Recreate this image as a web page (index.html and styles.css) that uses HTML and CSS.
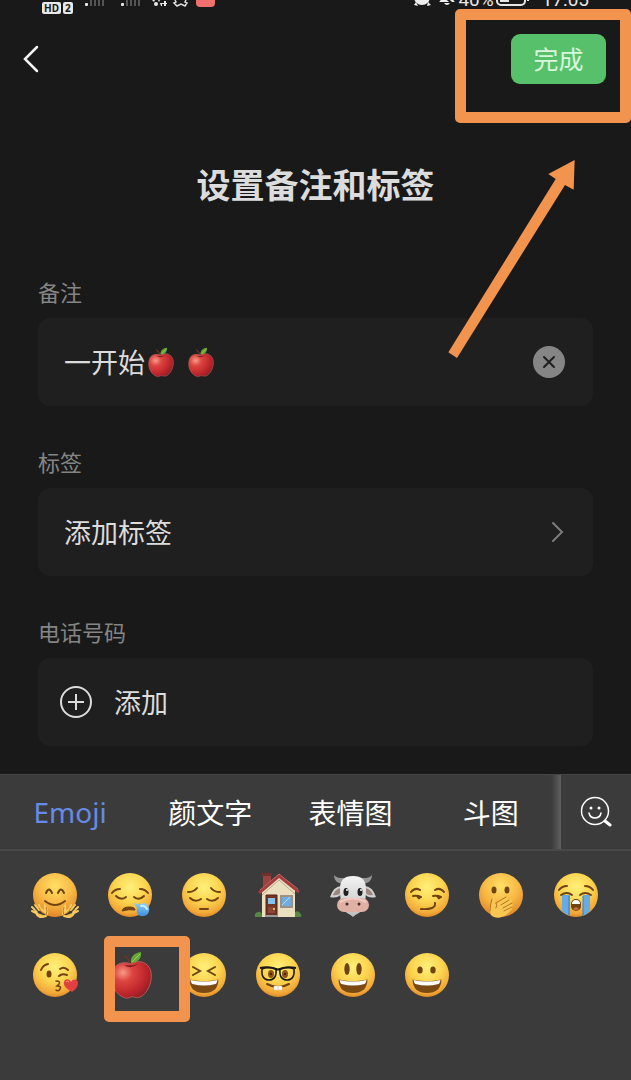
FILE: index.html
```html
<!DOCTYPE html>
<html lang="zh-CN">
  <head>
    <meta charset="UTF-8" />
    <meta name="viewport" content="width=device-width, initial-scale=1.0" />
    <title>设置备注和标签</title>
    <link rel="stylesheet" href="styles.css">
  </head>
  <body>
    <!-- shared emoji parts -->
    <svg class="defs" width="0" height="0" aria-hidden="true">
      <defs>
        <radialGradient id="skin" cx="50%" cy="32%" r="70%">
          <stop offset="0" stop-color="#fff07a" />
          <stop offset="0.5" stop-color="#fbd44f" />
          <stop offset="0.85" stop-color="#f2a838" />
          <stop offset="1" stop-color="#d98424" />
        </radialGradient>
        <radialGradient id="warm" cx="50%" cy="30%" r="72%">
          <stop offset="0" stop-color="#ffe067" />
          <stop offset="0.55" stop-color="#f8b843" />
          <stop offset="1" stop-color="#e08328" />
        </radialGradient>
        <radialGradient id="red" cx="28%" cy="30%" r="80%">
          <stop offset="0" stop-color="#f79a88" />
          <stop offset="0.3" stop-color="#dd4541" />
          <stop offset="0.75" stop-color="#bd242a" />
          <stop offset="1" stop-color="#8b1f24" />
        </radialGradient>
        <linearGradient id="water" x1="0" y1="0" x2="0" y2="1">
          <stop offset="0" stop-color="#8ecdf6" />
          <stop offset="1" stop-color="#3c8fdc" />
        </linearGradient>
        <linearGradient id="cowhide" x1="0" y1="0" x2="0" y2="1">
          <stop offset="0" stop-color="#f4f4f4" />
          <stop offset="1" stop-color="#bdbdbd" />
        </linearGradient>
      </defs>
      <symbol id="face" viewBox="0 0 48 48">
        <circle cx="24" cy="24" r="22" fill="url(#skin)" />
      </symbol>
      <symbol id="grin" viewBox="0 0 48 48">
        <path d="M9.500 28.500Q24 32 38.500 28.500Q38 42 24 42T9.500 28.500Z" fill="#7a4a12" />
        <path d="M10.500 29Q24 32 37.500 29Q37 32 35.500 33Q24 36 12.500 33Q11 32 10.500 29Z" fill="#fff" />
      </symbol>
      <symbol id="apple" viewBox="0 0 48 48">
        <path d="M25 14Q23 8 19 5" fill="none" stroke="#6b3424" stroke-width="2" stroke-linecap="round" />
        <path d="M25 13C32 8 43 11 45 21C47 32 40 44 34 46C30 48 28 45 25 46C21 48 18 47 15 45C8 41 4 30 7 20C9 12 18 10 25 13Z" fill="url(#red)" stroke="#b9595c" />
        <path d="M18 14Q25 19 32 13Q26 15 18 14Z" fill="#85201f" />
        <path d="M25 12C24 6 28 2 35 1C36 7 32 12 25 12Z" fill="#66a637" />
        <path d="M26 11L34 3" stroke="#a2cf5c" />
      </symbol>
    </svg>

    <div class="page">
      <div class="status-bar">
        <div class="status-left">
          <span class="badge">HD</span>
          <span class="badge">2</span>
          <svg class="signals" width="134" height="14" viewBox="0 0 134 14" aria-hidden="true">
            <g fill="#e8e8e8">
              <rect x="0" y="3" width="3" height="3" rx="1" />
              <rect x="36" y="3" width="3" height="3" rx="1" />
              <circle cx="71" cy="4" r="2" />
              <path d="M67 0h3l-1 2zM73 0h2l-1 2zM75 3h2v3h-1zM79 1h2v5h-2zM77 3h5v1h-5z" />
            </g>
            <path d="M4 0v6M8 0v6M12 0v6M16 0v6M40 0v6M44 0v6M48 0v6M52 0v6" transform="translate(2)" stroke="#555" stroke-width="2" />
            <path d="M90 0l1 2-2 1 3 3 4-2 4 2 2-3-2-1 1-2" fill="none" stroke="#ddd" stroke-width="1.500" />
            <rect x="111" y="-8" width="19" height="15" rx="4" fill="#ef706d" />
          </svg>
        </div>
        <div class="status-right">
          <svg width="44" height="20" viewBox="0 0 44 20" aria-hidden="true">
            <g fill="#eee">
              <circle cx="10" cy="7" r="8" />
              <path d="M4 12L2 15l4 1zM16 12l3 3-4 1z" />
              <path d="M27 12c3-2 3-10 8-11 5 1 5 9 8 11zM32 13h6q-3 4-6 0z" />
            </g>
            <path d="M26 1L42 15" stroke="#191919" stroke-width="2" />
          </svg>
          <span>40%</span>
          <svg class="battery" width="36" height="20" viewBox="0 0 36 20" aria-hidden="true">
            <rect x="1" y="1" width="28" height="14" rx="4" fill="none" stroke="#e6e6e6" stroke-width="2" />
            <path d="M4 4h9v8H4z" fill="#e6e6e6" />
            <path d="M32 6v5" stroke="#e6e6e6" stroke-width="2" />
          </svg>
          <span>17:05</span>
        </div>
      </div>

      <header class="top-bar">
        <button class="back" type="button" aria-label="返回">
          <svg width="18" height="30" viewBox="0 0 18 30"><path d="M15 3L3 15L15 27" fill="none" stroke="#f2f2f2" stroke-width="2.500" stroke-linecap="round" /></svg>
        </button>
        <div class="done-wrap">
          <button class="done" type="button">完成</button>
          <span class="frame frame-done"></span>
        </div>
      </header>

      <main>
        <h1>设置备注和标签</h1>

        <section class="field">
          <label for="remark">备注</label>
          <div class="card">
            <input type="text" id="remark" value="一开始" />
            <svg class="apple" viewBox="0 0 48 48"><use href="#apple" /></svg>
            <svg class="apple" viewBox="0 0 48 48"><use href="#apple" /></svg>
            <button class="clear" type="button" aria-label="清除">
              <svg width="32" height="32" viewBox="0 0 32 32"><circle cx="16" cy="16" r="16" fill="#858585" /><path d="M11 11L21 21M21 11L11 21" stroke="#1e1e1e" stroke-width="2" stroke-linecap="round" /></svg>
            </button>
          </div>
        </section>

        <section class="field">
          <h2>标签</h2>
          <button class="card" type="button">
            <span>添加标签</span>
            <svg class="chevron" width="14" height="22" viewBox="0 0 14 22"><path d="M2 2L11 11L2 20" fill="none" stroke="#7c7c7c" stroke-width="2" stroke-linecap="round" /></svg>
          </button>
        </section>

        <section class="field">
          <h2>电话号码</h2>
          <button class="card add" type="button">
            <svg width="32" height="32" viewBox="0 0 32 32"><circle cx="16" cy="16" r="15" fill="none" stroke="#dcdcdc" stroke-width="2" /><path d="M8 16h16M16 8v16" stroke="#dcdcdc" stroke-width="2" /></svg>
            <span>添加</span>
          </button>
        </section>
      </main>

      <div class="keyboard">
        <div class="tabs">
          <nav>
            <button class="active" type="button">Emoji</button>
            <button type="button">颜文字</button>
            <button type="button">表情图</button>
            <button type="button">斗图</button>
          </nav>
          <button class="search" type="button" aria-label="搜索表情">
            <svg width="32" height="32" viewBox="0 0 32 32" fill="none" stroke="#fff" stroke-linecap="round">
              <circle cx="15" cy="15" r="13.500" stroke-width="1.500" />
              <path d="M9 17Q10 22 15 22T21 17" stroke-width="1.500" />
              <path d="M25 25L30 29" stroke-width="3" />
              <path d="M11 12h0M19 12h0" stroke-width="3" />
            </svg>
          </button>
        </div>

        <div class="emoji-grid">
          <button type="button" aria-label="拥抱">
            <svg viewBox="0 0 48 48">
              <circle cx="24" cy="24" r="22" fill="url(#warm)" />
              <g fill="none" stroke="#714313" stroke-width="2" stroke-linecap="round">
                <path d="M15 22Q18 15 21 22M27 22Q30 15 33 22" />
                <path d="M14 30Q24 38 34 30" />
              </g>
              <g fill="#f6bd48" stroke="#f9cb60" stroke-width="2" stroke-linecap="round">
                <path d="M15 45Q7 48 5 42L1 40M6 41L1 36M8 39L4 34M10 39L8 34M10 38L14 41L14 35Q17 38 16 43Z" />
                <path d="M33 45Q41 48 43 42L47 40M42 41L47 36M40 39L44 34M38 39L40 34M38 38L34 41L34 35Q31 38 32 43Z" />
              </g>
              <path d="M7 41L4 38M10 40L8 37M41 41L44 38M38 40L40 37M15 36Q17 40 15 44M33 36Q31 40 33 44" stroke="#c27a22" fill="none" />
            </svg>
          </button>
          <button type="button" aria-label="困">
            <svg viewBox="0 0 48 48">
              <use href="#face" />
              <g fill="none" stroke="#714313" stroke-width="2" stroke-linecap="round">
                <path d="M6 22Q9 18 14 18M34 18Q39 18 42 22" />
                <path d="M10 25Q15 30 20 26M28 26Q33 30 38 25" />
              </g>
              <path d="M16 40Q17 36 23 36T29 39Q23 38 16 40Z" fill="#714313" stroke="#714313" />
              <path d="M27 32Q34 34 38 32C45 33 45 44 38 45C32 46 30 42 31 38Q31 35 27 32Z" fill="url(#water)" />
              <path d="M35 35Q39 34 41 38" stroke="#c9ecff" stroke-width="2" fill="none" stroke-linecap="round" />
            </svg>
          </button>
          <button type="button" aria-label="沉思">
            <svg viewBox="0 0 48 48">
              <use href="#face" />
              <g fill="none" stroke="#714313" stroke-width="2" stroke-linecap="round">
                <path d="M8 21Q14 21 17 17M31 17Q34 21 40 21" />
                <path d="M10 27Q15 32 21 28M27 28Q33 32 38 27" />
                <path d="M20 38H28" />
              </g>
            </svg>
          </button>
          <button type="button" aria-label="房子">
            <svg viewBox="0 0 48 48">
              <path d="M9 3h8v14H9z" fill="#984340" />
              <path d="M8 2h10v3H8z" fill="#6f302e" />
              <path d="M8 20L25 5L41 19V46H8Z" fill="#eadfbf" />
              <path d="M8 24L25 9L41 23" fill="none" stroke="#b9a98a" />
              <path d="M5 22L25 5L45 21" fill="none" stroke="#a53d40" stroke-width="3" />
              <path d="M6 19L25 3L44 18" fill="none" stroke="#c2625e" />
              <path d="M12 24h11v21H12z" fill="#713324" stroke="#532519" />
              <path d="M14 27h7v6h-7z" fill="#86bfe8" />
              <path d="M14 36h7v6h-7z" fill="#8a4632" />
              <circle cx="20" cy="38" r="1" fill="#e8d18a" />
              <path d="M27 25h11v11H27z" fill="#70ace0" stroke="#9b9285" stroke-width="2" />
              <path d="M28 34L36 26" stroke="#b8daf3" />
              <path d="M11 44h13v2H11z" fill="#9a9a9a" />
              <path d="M1 46Q0 42 4 41Q8 40 8 46ZM41 46V41Q44 39 46 42Q49 45 46 46Z" fill="#568842" />
            </svg>
          </button>
          <button type="button" aria-label="牛">
            <svg viewBox="0 0 48 48">
              <path d="M16 13C8 13 5 9 5 4C8 8 13 7 19 7ZM32 13C40 13 43 9 43 4C40 8 35 7 29 7Z" fill="#959595" />
              <path d="M14 15Q5 14 1 26Q9 28 13 22ZM34 15Q43 14 47 26Q39 28 35 22Z" fill="#cfcfcf" />
              <path d="M12 17Q6 18 4 24Q9 25 12 21ZM36 17Q42 18 44 24Q39 25 36 21Z" fill="#9c8680" />
              <path d="M24 5C33 5 37 9 37 18C37 26 36 32 35 38C31 42 27 43 24 46C21 43 17 42 13 38C12 32 11 26 11 18C11 9 15 5 24 5Z" fill="url(#cowhide)" />
              <rect x="8" y="27" width="32" height="14" rx="7" fill="#dfb1a5" />
              <path d="M11 31Q24 24 37 31" fill="none" stroke="#efcdc3" stroke-width="2" />
              <ellipse cx="17" cy="21" rx="2.500" ry="4" fill="#202020" />
              <ellipse cx="31" cy="21" rx="2.500" ry="4" fill="#202020" />
              <circle cx="18" cy="19" r="1" fill="#fff" />
              <circle cx="32" cy="19" r="1" fill="#fff" />
              <circle cx="18" cy="33" r="1.500" fill="#4b2826" />
              <circle cx="30" cy="33" r="1.500" fill="#4b2826" />
            </svg>
          </button>
          <button type="button" aria-label="得意">
            <svg viewBox="0 0 48 48">
              <use href="#face" />
              <g fill="none" stroke="#714313" stroke-width="2" stroke-linecap="round">
                <path d="M8 21Q12 16 17 19M32 19Q37 16 41 21" />
                <path d="M10 25Q14 24 18 26M30 25Q34 24 38 26" />
                <path d="M18 38Q33 39 32 32" />
              </g>
              <path d="M13 25h5q0 4-3 3zM33 25h5q0 4-3 3z" fill="#714313" />
            </svg>
          </button>
          <button type="button" aria-label="捂嘴">
            <svg viewBox="0 0 48 48">
              <circle cx="24" cy="24" r="22" fill="url(#warm)" />
              <ellipse cx="17" cy="19" rx="2.500" ry="3.500" fill="#714313" />
              <ellipse cx="30" cy="19" rx="2.500" ry="3.500" fill="#714313" />
              <path d="M14 44C11 38 14 32 15 27Q18 24 19 32L29 26Q32 26 31 29L34 28Q37 30 34 33Q37 33 35 36Q36 38 33 40C28 47 18 49 14 44Z" fill="#f8c653" />
              <path d="M19 32L29 26M24 34L32 29M26 37L35 32M27 40L35 36M15 28Q13 34 13 40M19 32Q21 34 19 37" fill="none" stroke="#b87322" stroke-linecap="round" />
            </svg>
          </button>
          <button type="button" aria-label="大哭">
            <svg viewBox="0 0 48 48">
              <use href="#face" />
              <path d="M10 24h8v21Q13 43 10 40ZM31 24h7v16Q35 43 31 45Z" fill="#64abe8" />
              <path d="M17 25v20M31 25v20" stroke="#3a7fc4" />
              <g fill="none" stroke="#714313" stroke-width="2" stroke-linecap="round">
                <path d="M7 19Q10 15 15 15M33 15Q38 15 41 19" />
                <path d="M9 24Q15 20 20 24M28 24Q33 20 39 24" />
              </g>
              <rect x="19" y="28" width="10" height="12" rx="5" fill="#714313" />
              <path d="M20 33Q20 29 24 29T28 33Z" fill="#fff" />
              <path d="M21 38Q24 34 27 38Q24 41 21 38Z" fill="#b96b38" />
            </svg>
          </button>
          <button type="button" aria-label="飞吻">
            <svg viewBox="0 0 48 48">
              <use href="#face" />
              <g fill="none" stroke="#714313" stroke-width="2" stroke-linecap="round">
                <path d="M10 19Q12 14 17 13M29 18Q33 15 37 19" />
                <path d="M28 25Q31 22 36 24" />
                <path d="M25 30Q30 30 28 33L26 35Q31 35 29 38T25 39" stroke-width="1.500" />
              </g>
              <ellipse cx="18" cy="23" rx="2.500" ry="3.500" fill="#714313" />
              <path d="M41 41C36 38 32 35 33 31C34 27 39 28 40 31C42 27 47 28 47 32C47 36 44 39 41 41Z" fill="#e2403f" />
              <path d="M35 31Q36 29 38 31" fill="none" stroke="#ff9185" />
            </svg>
          </button>
          <button class="picked" type="button" aria-label="苹果">
            <svg viewBox="0 0 48 48"><use href="#apple" /></svg>
            <span class="frame frame-apple"></span>
          </button>
          <button type="button" aria-label="大笑">
            <svg viewBox="0 0 48 48">
              <use href="#face" />
              <use href="#grin" />
              <path d="M13 16L20 20L13 24M35 16L28 20L35 24" fill="none" stroke="#714313" stroke-width="2" stroke-linecap="round" />
            </svg>
          </button>
          <button type="button" aria-label="书呆子">
            <svg viewBox="0 0 48 48">
              <use href="#face" />
              <ellipse cx="17" cy="23" rx="3" ry="4" fill="#8b5317" />
              <ellipse cx="31" cy="23" rx="3" ry="4" fill="#8b5317" />
              <circle cx="17" cy="23" r="1" fill="#2e1a06" />
              <circle cx="31" cy="23" r="1" fill="#2e1a06" />
              <g fill="none" stroke="#171717" stroke-width="1.500">
                <path d="M8 18Q15 15 22 18Q23 29 15 29T8 18ZM26 18Q33 15 40 18Q41 29 33 29T26 18Z" />
                <path d="M6 17Q15 15 22 18Q24 19 26 18Q33 15 42 17" stroke-width="2" />
              </g>
              <path d="M13 33Q24 39 35 33" fill="none" stroke="#714313" stroke-width="2" stroke-linecap="round" />
              <path d="M20 35h4v4h-4zM24 35h4v4h-4z" fill="#fff" stroke="#d9c9a0" stroke-width="0.500" />
            </svg>
          </button>
          <button type="button" aria-label="开心">
            <svg viewBox="0 0 48 48">
              <use href="#face" />
              <use href="#grin" />
              <ellipse cx="18" cy="18" rx="2.700" ry="6" fill="#714313" />
              <ellipse cx="30" cy="18" rx="2.700" ry="6" fill="#714313" />
            </svg>
          </button>
          <button type="button" aria-label="微笑">
            <svg viewBox="0 0 48 48">
              <use href="#face" />
              <use href="#grin" />
              <ellipse cx="17" cy="19" rx="2.700" ry="3.500" fill="#714313" />
              <ellipse cx="30" cy="19" rx="2.700" ry="3.500" fill="#714313" />
            </svg>
          </button>
        </div>
      </div>

      <svg class="arrow" width="201" height="270" viewBox="0 0 603 810" aria-hidden="true">
        <path d="M434 30L355 72L377 87L55 607L81 624L405 105L431 119Z" fill="#f2934e" />
      </svg>
    </div>
  </body>
</html>
```
FILE: styles.css
```css
* {
  box-sizing: border-box;
}
body {
  margin: 0;
  background: #191919;
  color: #dcdcdc;
  font-family: "Noto Sans", "Noto Sans CJK SC", sans-serif;
}
button {
  margin: 0;
  padding: 0;
  border: none;
  background: none;
  color: inherit;
  font: inherit;
  cursor: pointer;
}
svg {
  display: block;
  flex: none;
}
.defs {
  position: absolute;
}
.page {
  position: relative;
  display: flex;
  flex-direction: column;
  min-height: 100vh;
  overflow: hidden;
}

/* status bar */
.status-bar {
  display: flex;
  justify-content: space-between;
  height: 14px;
  padding: 0 42px;
  overflow: hidden;
}
.status-left {
  display: flex;
  align-items: flex-end;
  gap: 2px;
}
.badge {
  padding: 0 2px;
  border-radius: 2px;
  background: #e8e8e8;
  color: #191919;
  font-size: 10px;
  font-weight: bold;
  line-height: 12px;
}
.signals {
  margin-left: 10px;
}
.status-right {
  display: flex;
  align-items: flex-end;
  gap: 2px;
  padding-bottom: 4px;
  color: #e6e6e6;
  font-family: Roboto, sans-serif;
  font-size: 19px;
  line-height: 20px;
}
.battery {
  margin-right: 8px;
}

/* header */
.top-bar {
  display: flex;
  justify-content: space-between;
  align-items: center;
  padding: 20px 25px 0 22px;
}
.done-wrap {
  position: relative;
}
.done {
  display: block;
  width: 95px;
  height: 50px;
  padding-bottom: 2px;
  border-radius: 9px;
  background: #57c06a;
  color: #d9f7dc;
  font-size: 25px;
}
.frame {
  position: absolute;
  border: 11px solid #f2934e;
  border-radius: 5px;
  pointer-events: none;
}
.frame-done {
  top: -25px;
  right: -25px;
  bottom: -39px;
  left: -56px;
}
.arrow {
  position: absolute;
  top: 150px;
  right: 0;
  pointer-events: none;
}

/* form */
main {
  padding: 77px 38px 28px;
}
h1 {
  margin: 0 0 67px;
  font-size: 34px;
  font-weight: 700;
  line-height: 48px;
  text-align: center;
}
.field + .field {
  margin-top: 40px;
}
.field label,
.field h2 {
  display: block;
  margin: 0 0 10px;
  color: #858585;
  font-size: 22px;
  font-weight: 400;
  line-height: 32px;
}
.card {
  display: flex;
  align-items: center;
  width: 100%;
  height: 88px;
  padding: 0 28px 0 26px;
  border-radius: 12px;
  background: #1f1f1f;
  font-size: 27px;
  text-align: left;
}
.card span,
.card input {
  padding: 0 0 2px;
}
.card input {
  width: 3em;
  border: none;
  outline: none;
  background: none;
  color: inherit;
  font: inherit;
}
.apple {
  width: 30px;
  height: 30px;
  margin-right: 10px;
}
.clear,
.chevron {
  margin-left: auto;
}
.card.add {
  gap: 22px;
  padding: 0 22px;
}

/* emoji keyboard */
.keyboard {
  flex: 1;
  background: #3b3b3b;
}
.tabs {
  display: flex;
  height: 77px;
  border-top: 1px solid #444;
  border-bottom: 2px solid #494949;
}
.tabs nav {
  flex: 8;
  display: grid;
  grid-template-columns: repeat(4, 1fr);
  background: linear-gradient(to left, #606060, #3b3b3b 10px);
  color: #fff;
  font-size: 28px;
}
.tabs .active {
  color: #668be6;
}
.search {
  flex: 1;
  display: flex;
  justify-content: center;
  align-items: center;
}
.emoji-grid {
  display: grid;
  grid-template-columns: repeat(8, 1fr);
  grid-auto-rows: 80px;
  padding: 4px 18px;
}
.emoji-grid button {
  position: relative;
  display: flex;
  justify-content: center;
  align-items: center;
}
.emoji-grid svg {
  width: 48px;
  height: 48px;
}
.emoji-grid .picked {
  z-index: 1;
}
.frame-apple {
  top: 1px;
  left: 12px;
  width: 86px;
  height: 86px;
}
```
